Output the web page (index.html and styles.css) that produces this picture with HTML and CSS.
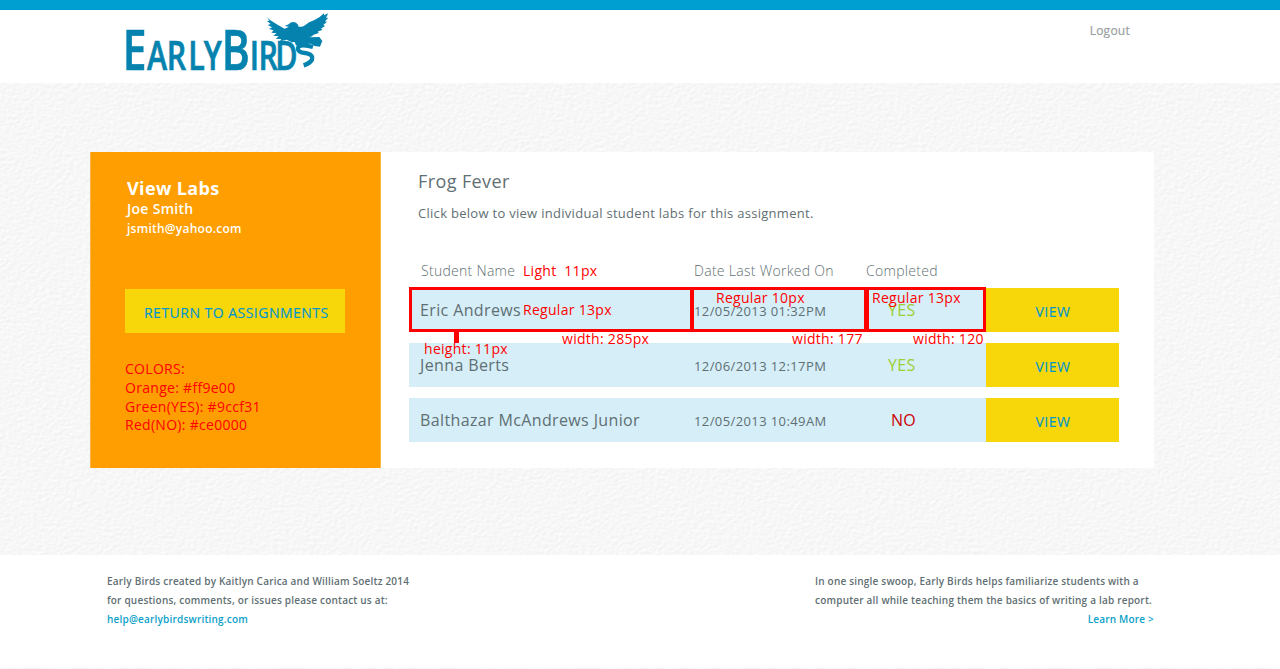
FILE: index.html
```html
<!DOCTYPE html>
<html lang="en">
<head>
<meta charset="utf-8">
<title>Early Birds - View Labs</title>
<link rel="stylesheet" href="styles.css">
</head>
<body>
<svg class="paper" width="1280" height="669" aria-hidden="true">
  <filter id="grain" x="0" y="0" width="100%" height="100%" color-interpolation-filters="sRGB">
    <feTurbulence type="fractalNoise" baseFrequency="0.25 0.32" numOctaves="3" seed="4"/>
    <feDiffuseLighting surfaceScale="0.11" diffuseConstant="1.14" lighting-color="#fafafa">
      <feDistantLight azimuth="235" elevation="60"/>
    </feDiffuseLighting>
  </filter>
  <rect width="1280" height="669" filter="url(#grain)"/>
</svg>
<header class="header">
  <svg class="logo" width="210" height="64" viewBox="122 10 210 64" role="img" aria-label="Early Birds">
    <g class="logo-text" transform="translate(122.8 70) scale(.76 1)">
      <text class="big" x="0" y="0">E</text>
      <text class="small" x="31.8 58 86 106.5" y="0">ARLY</text>
      <text class="big" x="130.3" y="0">B</text>
      <text class="small" x="167 178.5 200.5" y="0">IRD</text>
    </g>
    <g transform="translate(110 0) scale(.3333)">
      <path class="bird" d="M471 52 L480 60 Q501 74 524 86 L537 80 L524 78 L536 73 Q541 66 551 66 Q563 68 566 80 Q577 82 585 76 Q596 65 612 61 Q630 53 642 40 L642 46 L655 40 L648 53 L655 53 L645 64 L651 65 L640 75 L645 78 L633 86 L638 90 L624 94 L626 99 L611 104 Q605 110 598 112 L628 111 L637 123 L630 140 L614 138 L602 131 L576 133 Q570 137 558 136 L554 126 L546 127 L530 119 L510 124 L514 117 L498 117 L506 109 L490 107 L500 100 L484 98 L491 91 L477 87 L486 82 L473 75 L482 72 L471 63 L478 62Z"/>
      <path class="ess" d="M609 141 Q580 132 566 139 Q559 151 574 157 L591 160 Q611 165 606 179 Q600 190 581 196"/>
    </g>
  </svg>
  <a class="logout">Logout</a>
</header>
<main class="card">
  <aside class="side">
    <h1>View Labs</h1>
    <p class="name">Joe Smith</p>
    <p class="mail">jsmith@yahoo.com</p>
    <a class="return"><span>RETURN TO ASSIGNMENTS</span></a>
    <div class="colors">COLORS:<br>Orange: #ff9e00<br>Green(YES): #9ccf31<br>Red(NO): #ce0000</div>
  </aside>
  <section class="content">
    <h2>Frog Fever</h2>
    <p class="intro">Click below to view individual student labs for this assignment.</p>
    <div class="table">
      <div class="row head"><span class="c1">Student Name</span><span class="c2">Date Last Worked On</span><span>Completed</span></div>
      <div class="row"><span class="c1">Eric Andrews</span><span class="date">12/05/2013 01:32PM</span><span class="yes">YES</span><a class="view">VIEW</a></div>
      <div class="row"><span class="c1">Jenna Berts</span><span class="date">12/06/2013 12:17PM</span><span class="yes">YES</span><a class="view">VIEW</a></div>
      <div class="row"><span class="c1">Balthazar McAndrews Junior</span><span class="date">12/05/2013 10:49AM</span><span class="no">NO</span><a class="view">VIEW</a></div>
      <div class="box box-name"></div>
      <div class="box box-date"></div>
      <div class="box box-done"></div>
      <div class="tick"></div>
      <span class="note n1">Light&nbsp; 11px</span>
      <span class="note n2">Regular 13px</span>
      <span class="note n3">Regular 10px</span>
      <span class="note n4">Regular 13px</span>
      <span class="note n5">height: 11px</span>
      <span class="note n6">width: 285px</span>
      <span class="note n7">width: 177</span>
      <span class="note n8">width: 120</span>
    </div>
  </section>
</main>
<footer class="footer">
  <div class="credit">Early Birds created by Kaitlyn Carica and William Soeltz 2014<br>for questions, comments, or issues please contact us at:<br><a class="help">help@earlybirdswriting.com</a></div>
  <div class="about">In one single swoop, Early Birds helps familiarize students with a<br>computer all while teaching them the basics of writing a lab report.<br><a class="more">Learn More &gt;</a></div>
</footer>
</body>
</html>
```
FILE: styles.css
```css
* { box-sizing: border-box; }
body {
  margin: 0;
  height: 669px;
  overflow: hidden;
  background: #f6f6f6;
  color: #5f6f73;
  font-family: "Open Sans", sans-serif;
  white-space: nowrap;
}
h1, h2, p { margin: 0; }
.paper { position: absolute; left: 0; top: 0; z-index: -1; }
.header {
  display: flex;
  justify-content: space-between;
  height: 83px;
  padding: 0 150px 0 122px;
  background: #fff;
  border-top: 10px solid #009fd1;
}
.logo { display: block; overflow: visible; }
.logo-text { fill: #0583ae; stroke: #0583ae; stroke-width: .7; font-weight: 600; }
.big { font-size: 56px; }
.small { font-size: 40px; }
.bird { fill: #0583ae; }
.ess { fill: none; stroke: #0583ae; stroke-width: 13; }
.logout { margin-top: 12px; font-size: 12px; line-height: 18px; letter-spacing: .25px; -webkit-text-stroke: .2px; color: #999fa2; }

.card { display: flex; width: 1064px; height: 316px; margin: 69px 0 87px 90px; background: #fff; }
.side { width: 291px; padding: 25px 35px 0; background: #ff9e00; border: 1px solid #ffb643; border-width: 0 1px; color: #fff; }
.side h1 { padding-left: 1px; font-size: 18px; line-height: 23px; font-weight: 700; letter-spacing: .35px; }
.name { padding-left: 1px; font-size: 14px; line-height: 18px; font-weight: 600; letter-spacing: .3px; }
.mail { padding-left: 1px; font-size: 12px; line-height: 22px; font-weight: 600; letter-spacing: .25px; }
.return {
  display: block;
  width: 220px;
  height: 44px;
  margin: 49px 0 0 -1px;
  padding-left: 19px;
  background: #f7d70a;
  color: #0096cf;
  font-size: 14px;
  line-height: 48px;
  -webkit-text-stroke: .15px;
  letter-spacing: .48px;
}
.colors { margin: 27px 0 0 -1px; color: #f00; font-size: 14px; line-height: 18.75px; letter-spacing: .29px; }

.content { padding: 17px 0 0 28px; }
.content h2 { padding-left: 9px; font-size: 18px; line-height: 24px; font-weight: 400; letter-spacing: .4px; }
.intro { padding: 10px 0 0 9px; font-size: 13px; line-height: 20px; letter-spacing: .29px; }
.table { position: relative; width: 710px; margin-top: 32px; }
.row {
  display: grid;
  grid-template-columns: 285px 172px 120px 132px;
  height: 44px;
  margin-bottom: 11px;
  background: linear-gradient(90deg, #d5eef8 577px, #f7d70a 577px);
  font-size: 16px;
  line-height: 45px;
  letter-spacing: .37px;
}
.row.head { height: 33px; margin: 0; background: none; font-size: 14px; line-height: 32px; font-weight: 300; letter-spacing: .29px; }
.c1 { padding-left: 11px; }
.head .c1 { padding-left: 12px; }
.date { font-size: 13px; line-height: 47px; letter-spacing: .4px; }
.yes { padding-left: 22px; color: #9ccf31; }
.no { padding-left: 25px; color: #ce0000; letter-spacing: .2px; }
.view { padding-left: 2px; text-align: center; color: #0096cf; font-size: 14px; line-height: 48px; -webkit-text-stroke: .15px; letter-spacing: .5px; }

.box { position: absolute; top: 32px; height: 45px; border: 3px solid #f00; }
.box-name { left: 0; width: 285px; }
.box-date { left: 281px; width: 179px; border-width: 3px 4px; }
.box-done { left: 455px; width: 122px; border-left-width: 5px; }
.tick { position: absolute; left: 45px; top: 77px; width: 5px; height: 11px; background: #f00; }
.note { position: absolute; color: #f00; font-size: 14px; line-height: 18px; letter-spacing: .29px; }
.n1 { left: 114px; top: 7px; }
.n2 { left: 114px; top: 46px; }
.n3 { left: 307px; top: 34px; }
.n4 { left: 463px; top: 34px; }
.n5 { left: 15px; top: 85px; }
.n6 { left: 153px; top: 75px; }
.n7 { left: 383px; top: 75px; }
.n8 { left: 504px; top: 75px; }

.footer {
  display: flex;
  justify-content: space-between;
  height: 113px;
  padding: 17px 126px 0 107px;
  background: #fff;
  font-size: 10px;
  line-height: 19px;
  font-weight: 600;
  letter-spacing: .2px;
}
.about { width: 339px; }
.help, .more { color: #0a9fc9; }
.more { display: block; text-align: right; }
```
